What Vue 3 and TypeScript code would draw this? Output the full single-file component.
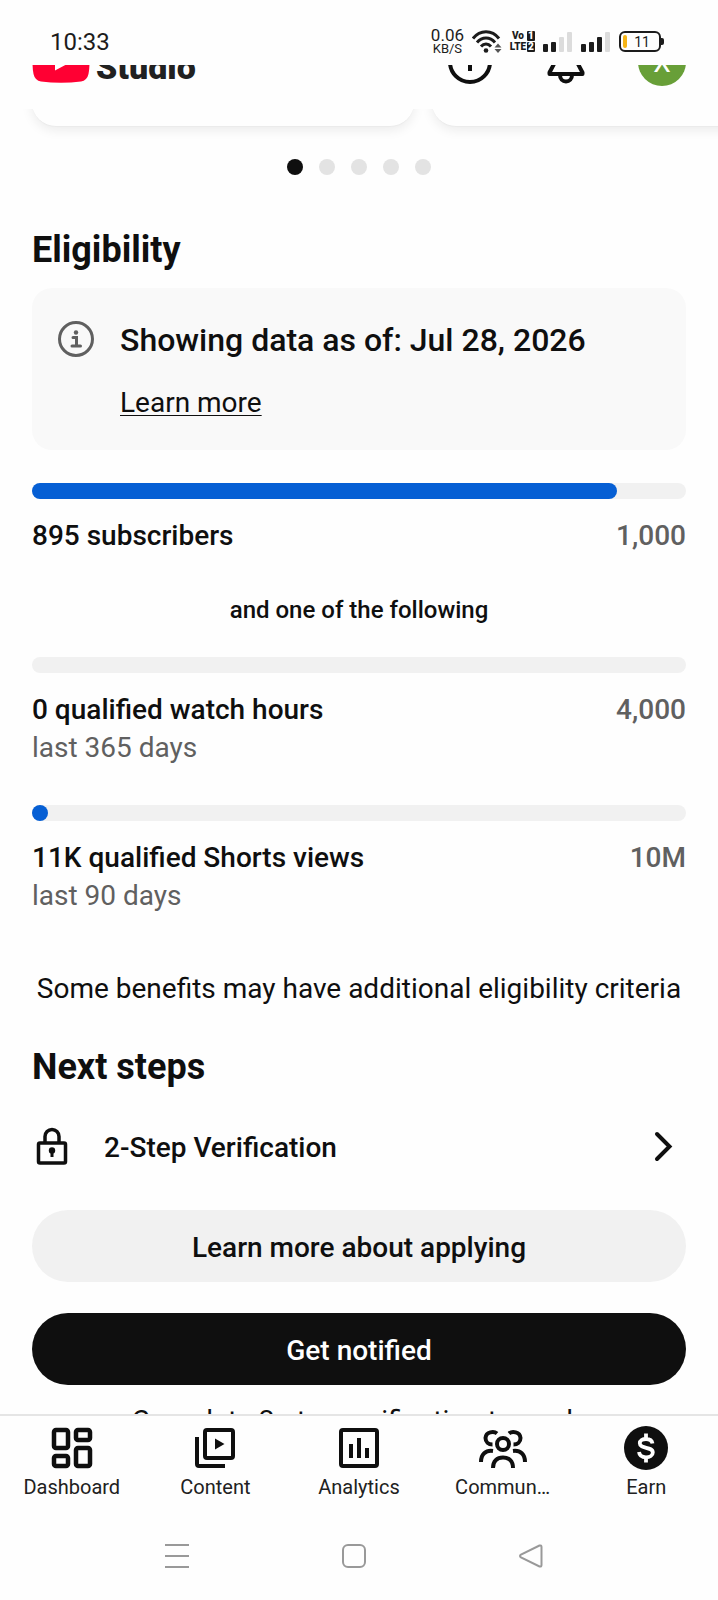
<script setup lang="ts">
interface Metric {
  id: string
  label: string
  goal: string
  period?: string
  percent: number
}

const subscribers: Metric = { id: 'subscribers', label: '895 subscribers', goal: '1,000', percent: 89.5 }

const alternatives: Metric[] = [
  { id: 'hours', label: '0 qualified watch hours', goal: '4,000', period: 'last 365 days', percent: 0 },
  { id: 'shorts', label: '11K qualified Shorts views', goal: '10M', period: 'last 90 days', percent: 0.11 },
]

const signals = [2, 3]
const barHeights = [8, 10, 15, 20]
const slides = 5
const activeSlide = 1
</script>

<template>
  <div class="app">
    <div class="status">
      <time class="clock">10:33</time>
      <div class="status-icons">
        <div class="speed"><span>0.06</span><small>KB/S</small></div>
        <svg class="wifi" viewBox="0 0 30 24" aria-hidden="true">
          <g fill="none" stroke="#1c1c1c" stroke-width="3">
            <path d="M1 8.500C8-.5 20-.5 27 8.500" />
            <path d="M5 12.500C10 6.500 18 6.500 23 12.500" />
            <path d="M9 16.500C12 13 16 13 19 16.500" />
          </g>
          <circle cx="14" cy="20.500" r="2.300" fill="#1c1c1c" />
          <path d="M26 13.500l3.500 4h-7zM26 23l3.500-4h-7z" fill="#555" />
        </svg>
        <div class="volte">
          <span>Vo</span><b>1</b>
          <span>LTE</span><b>2</b>
        </div>
        <svg v-for="level in signals" :key="level" class="signal" viewBox="0 0 30 20" aria-hidden="true">
          <rect
            v-for="(h, i) in barHeights"
            :key="h"
            :x="i * 8"
            :y="20 - h"
            width="5"
            :height="h"
            rx="1"
            :fill="i < level ? '#1c1c1c' : '#dcdcdc'"
          />
        </svg>
        <div class="battery"><i></i><span>11</span></div>
      </div>
    </div>

    <header class="topbar">
      <div class="topbar-row">
        <svg class="logo" viewBox="0 0 58 41" aria-hidden="true">
          <path d="M9 1.500Q29-1 49 1.500Q55 2.500 56.500 9Q58.500 20.500 56.500 32Q55 38.500 49 39.500Q29 42 9 39.500Q3 38.500 1.500 32Q-.5 20.500 1.500 9Q3 2.500 9 1.500Z" fill="#ff0033" />
          <path d="M23 11.500v17l16-8.500z" fill="#fff" />
        </svg>
        <span class="brand">Studio</span>
        <div class="actions">
          <button class="icon-button" aria-label="Create">
            <svg viewBox="0 0 48 48" fill="none" stroke="#0f0f0f" stroke-width="4">
              <circle cx="24" cy="24" r="20" />
              <path d="M24 15v18M15 24h18" />
            </svg>
          </button>
          <button class="icon-button" aria-label="Notifications">
            <svg viewBox="0 0 48 48" fill="none" stroke="#0f0f0f" stroke-width="4" stroke-linejoin="round">
              <path d="M24 5c-8 0-12 5-12 13v8L7.500 34.500v1.500h33v-1.500L36 26v-8c0-8-4-13-12-13z" />
              <path d="M18 37c0 4 2.500 6.500 6 6.500s6-2.500 6-6.500" />
            </svg>
          </button>
          <button class="avatar" aria-label="Account">X</button>
        </div>
      </div>
    </header>

    <main class="content">
      <div class="carousel">
        <div class="slide"></div>
        <div class="slide"></div>
      </div>
      <div class="dots">
        <span v-for="n in slides" :key="n" :class="['dot', { active: n === activeSlide }]"></span>
      </div>

      <section class="eligibility">
        <h2>Eligibility</h2>
        <div class="notice">
          <svg class="info" viewBox="0 0 36 36" aria-hidden="true">
            <circle cx="18" cy="18" r="16.500" fill="none" stroke="#606060" stroke-width="3" />
            <circle cx="18" cy="11.500" r="2.200" fill="#606060" />
            <path d="M15 16.500h3.500v8.500M14 25h8.500" fill="none" stroke="#606060" stroke-width="3" stroke-linecap="round" />
          </svg>
          <div class="notice-text">
            <p>Showing data as of: Jul 28, 2026</p>
            <a href="#">Learn more</a>
          </div>
        </div>

        <div class="metric">
          <div class="track" role="progressbar" :aria-valuenow="subscribers.percent" aria-label="Subscribers">
            <div class="fill" :style="{ width: subscribers.percent + '%' }"></div>
          </div>
          <div class="metric-row">
            <span>{{ subscribers.label }}</span><span class="goal">{{ subscribers.goal }}</span>
          </div>
        </div>

        <p class="either">and one of the following</p>

        <div v-for="m in alternatives" :key="m.id" class="metric alternative">
          <div class="track" role="progressbar" :aria-valuenow="m.percent" :aria-label="m.label">
            <div v-if="m.percent > 0" class="fill" :style="{ width: m.percent + '%' }"></div>
          </div>
          <div class="metric-row">
            <span>{{ m.label }}</span><span class="goal">{{ m.goal }}</span>
          </div>
          <p class="period">{{ m.period }}</p>
        </div>

        <p class="criteria">Some benefits may have additional eligibility criteria</p>
      </section>

      <section class="next">
        <h2>Next steps</h2>
        <button class="step">
          <svg class="lock" viewBox="0 0 40 40" aria-hidden="true">
            <rect x="6.500" y="17" width="27" height="20" rx="1.500" fill="none" stroke="#0f0f0f" stroke-width="3.500" />
            <path d="M13 16v-5.500a7 7 0 0 1 14 0V16" fill="none" stroke="#0f0f0f" stroke-width="3.500" />
            <circle cx="20" cy="24.500" r="3.200" fill="#0f0f0f" />
            <path d="M20 25v6" stroke="#0f0f0f" stroke-width="3" />
          </svg>
          <span>2-Step Verification</span>
          <svg class="chevron" viewBox="0 0 48 48" aria-hidden="true">
            <path d="M19 12l12.500 12.500L19 37" fill="none" stroke="#0f0f0f" stroke-width="4" stroke-linecap="round" />
          </svg>
        </button>
        <button class="pill light">Learn more about applying</button>
        <button class="pill dark">Get notified</button>
        <p class="hint">Complete 2-step verification to apply</p>
      </section>
    </main>

    <nav class="tabs" aria-label="Main">
      <a href="#" class="tab">
        <svg viewBox="0 0 48 48" fill="none" stroke="#0f0f0f" stroke-width="4.500">
          <rect x="6" y="6" width="14" height="18" rx="2" />
          <rect x="28" y="6" width="14" height="10" rx="2" />
          <rect x="6" y="32" width="14" height="10" rx="2" />
          <rect x="28" y="24" width="14" height="18" rx="2" />
        </svg>
        <span>Dashboard</span>
      </a>
      <a href="#" class="tab">
        <svg viewBox="0 0 48 48" fill="none" stroke="#0f0f0f" stroke-width="4">
          <rect x="14" y="6" width="28" height="28" rx="2" />
          <path d="M6 13v27q0 2 2 2h26" />
          <path d="M24 14.500v11l9.500-5.500z" fill="#0f0f0f" stroke="none" />
        </svg>
        <span>Content</span>
      </a>
      <a href="#" class="tab">
        <svg viewBox="0 0 48 48" fill="none" stroke="#0f0f0f" stroke-width="4">
          <rect x="6" y="6" width="36" height="36" rx="2" />
          <path d="M16 20v14M24 14v20M32 24v10" />
        </svg>
        <span>Analytics</span>
      </a>
      <a href="#" class="tab">
        <svg viewBox="0 0 48 48" fill="none" stroke="#0f0f0f" stroke-width="4">
          <circle cx="24" cy="20" r="6" />
          <path d="M14 44c0-7 4-10.500 10-10.500s10 3.500 10 10.500" />
          <path d="M18 9.500C15 7 7 7.500 6.500 14c0 4 3 6.500 7 6.500" />
          <path d="M30 9.500c3-2.500 11-2 11.500 4.500 0 4-3 6.500-7 6.500" />
          <path d="M2 38c0-7.500 4.500-12 12-11" />
          <path d="M46 38c0-7.500-4.500-12-12-11" />
        </svg>
        <span>Commun…</span>
      </a>
      <a href="#" class="tab" aria-current="page">
        <svg viewBox="0 0 48 48">
          <circle cx="24" cy="24" r="22" fill="#0f0f0f" />
          <path d="M30.500 19.500c-.5-3-3-4.500-6.500-4.500s-6.200 1.600-6.200 4.300c0 6 13 3 13 9.200 0 3-3 4.800-6.800 4.800-4 0-6.600-2-7-5.200M24 9.500V15M24 33v5.500" fill="none" stroke="#fff" stroke-width="3.800" />
        </svg>
        <span>Earn</span>
      </a>
    </nav>

    <div class="system">
      <button aria-label="Recent apps">
        <svg viewBox="0 0 24 24"><path d="M0 1h24M0 12h24M0 23h24" /></svg>
      </button>
      <button aria-label="Home">
        <svg viewBox="0 0 24 24"><rect x="1" y="1" width="22" height="22" rx="5" /></svg>
      </button>
      <button aria-label="Back">
        <svg viewBox="0 0 24 24"><path d="M20.500 1.500L2 10.500q-2 1.500 0 3l18.500 9q2 .5 2-1.500V3q0-2-2-1.500z" /></svg>
      </button>
    </div>
  </div>
</template>

<style>
body {
  margin: 0;
  background: #fefefe;
}
</style>

<style scoped>
.app {
  display: flex;
  flex-direction: column;
  height: 100vh;
  overflow: hidden;
  font-family: Roboto, "Liberation Sans", sans-serif;
  color: #0f0f0f;
  background: #fefefe;
}
h2, p {
  margin: 0;
}
button {
  padding: 0;
  border: 0;
  background: none;
  color: inherit;
  font: inherit;
}
svg {
  display: block;
  flex: none;
}

.status {
  display: flex;
  flex: none;
  align-items: center;
  justify-content: space-between;
  height: 47px;
  padding: 18px 54px 0 50px;
}
.clock {
  font-size: 24px;
  line-height: 28px;
  color: #1c1c1c;
}
.status-icons {
  display: flex;
  align-items: center;
  gap: 8px;
  color: #1c1c1c;
}
.speed {
  display: flex;
  flex-direction: column;
  align-items: center;
  font-size: 17px;
  line-height: 14px;
}
.speed small {
  font-size: 13px;
}
.wifi {
  width: 30px;
  height: 24px;
}
.volte {
  display: grid;
  grid-template-columns: 16px 8px;
  gap: 1px;
  font-size: 10px;
  font-weight: 900;
  line-height: 10px;
  text-align: center;
}
.volte span {
  display: flex;
  justify-content: center;
}
.volte b {
  border-radius: 1px;
  background: #1c1c1c;
  color: #fff;
}
.signal {
  width: 30px;
  height: 20px;
}
.battery {
  display: flex;
  align-items: center;
  position: relative;
  box-sizing: border-box;
  width: 42px;
  height: 21px;
  margin-right: 3px;
  padding: 2px;
  border: 2px solid #1c1c1c;
  border-radius: 6px;
  font-size: 14px;
}
.battery::after {
  content: "";
  position: absolute;
  top: 5px;
  right: -5px;
  width: 3px;
  height: 7px;
  border-radius: 0 2px 2px 0;
  background: #1c1c1c;
}
.battery i {
  width: 4px;
  height: 100%;
  border-radius: 2px;
  background: #f5b416;
}
.battery span {
  flex: 1;
  text-align: center;
}

.topbar {
  display: flex;
  flex: none;
  align-items: flex-end;
  height: 44px;
  overflow: hidden;
}
.topbar-row {
  display: flex;
  flex: 1;
  align-items: center;
  height: 94px;
  padding: 0 32px;
}
.logo {
  width: 58px;
  height: 41px;
}
.brand {
  padding: 10px 0 0 6px;
  font-size: 34px;
  font-weight: 900;
  line-height: 40px;
  color: #212121;
}
.actions {
  display: flex;
  gap: 48px;
  margin-left: auto;
}
.icon-button, .icon-button svg, .avatar {
  width: 48px;
  height: 48px;
}
.avatar {
  border-radius: 50%;
  background: #689f38;
  color: #fff;
  font-size: 28px;
}

.content {
  flex: 1;
  min-height: 0;
  overflow: hidden;
}
.carousel {
  display: flex;
  align-items: flex-end;
  gap: 18px;
  height: 18px;
  padding: 0 0 24px 32px;
  overflow: hidden;
}
.slide {
  flex: none;
  box-sizing: border-box;
  width: 382px;
  height: 120px;
  border-bottom: 1px solid #ebebeb;
  border-radius: 24px;
  background: #fefefe;
  box-shadow: 0 3px 12px rgba(0, 0, 0, 0.08);
}
.dots {
  display: flex;
  justify-content: center;
  gap: 16px;
  padding-top: 8px;
}
.dot {
  width: 16px;
  height: 16px;
  border-radius: 50%;
  background: #e3e3e3;
}
.dot.active {
  background: #0f0f0f;
}

.eligibility, .next {
  padding: 0 32px;
}
.eligibility {
  padding-top: 53px;
}
h2 {
  font-size: 36px;
  font-weight: 700;
  line-height: 44px;
}
.notice {
  display: flex;
  gap: 26px;
  margin: 16px 0 33px;
  padding: 32px 26px 29px;
  border-radius: 20px;
  background: #f9f9f9;
}
.info {
  width: 36px;
  height: 36px;
  padding-top: 1px;
}
.notice-text {
  display: flex;
  flex-direction: column;
  align-items: flex-start;
  gap: 25px;
}
.notice p {
  font-size: 32px;
  font-weight: 500;
  line-height: 40px;
}
.notice a {
  color: inherit;
  font-size: 28px;
  line-height: 36px;
  text-decoration-thickness: 1px;
  text-underline-offset: 3px;
}
.track {
  height: 16px;
  border-radius: 8px;
  background: #f1f1f1;
}
.fill {
  min-width: 16px;
  height: 16px;
  border-radius: 8px;
  background: #065fd4;
}
.metric-row {
  display: flex;
  justify-content: space-between;
  margin-top: 18px;
  font-size: 28px;
  font-weight: 500;
  line-height: 38px;
}
.goal, .period {
  color: #606060;
}
.period, .criteria {
  font-size: 28px;
  line-height: 38px;
}
.either {
  margin: 39px 0 31px;
  font-size: 24px;
  font-weight: 500;
  line-height: 32px;
  text-align: center;
}
.alternative + .alternative {
  margin-top: 38px;
}
.criteria {
  margin-top: 55px;
  text-align: center;
  white-space: nowrap;
}

.next {
  padding-top: 37px;
}
.step {
  display: flex;
  align-items: center;
  width: 100%;
  height: 64px;
  margin: 25px 0 32px;
  font-size: 28px;
  font-weight: 500;
}
.lock {
  width: 40px;
  height: 40px;
}
.step span {
  padding: 2px 0 0 32px;
}
.chevron {
  width: 48px;
  height: 48px;
  margin-left: auto;
}
.pill {
  display: block;
  box-sizing: border-box;
  width: 100%;
  height: 72px;
  padding-top: 2px;
  border-radius: 36px;
  font-size: 28px;
  font-weight: 500;
}
.pill.light {
  background: #f1f1f1;
}
.pill.dark {
  margin-top: 31px;
  background: #0f0f0f;
  color: #fff;
}
.hint {
  margin-top: 18px;
  font-size: 28px;
  line-height: 36px;
  text-align: center;
}

.tabs {
  display: grid;
  flex: none;
  grid-template-columns: repeat(5, 1fr);
  padding: 8px 0 13px;
  border-top: 2px solid #e5e5e5;
}
.tab {
  display: flex;
  flex-direction: column;
  align-items: center;
  gap: 3px;
  color: #212121;
  font-size: 20px;
  line-height: 24px;
  text-decoration: none;
}
.tab svg {
  width: 48px;
  height: 48px;
}
.system {
  display: grid;
  flex: none;
  grid-template-columns: repeat(3, 1fr);
  padding: 0 99px 0 88px;
}
.system button {
  display: flex;
  align-items: center;
  justify-content: center;
  height: 88px;
}
.system svg {
  width: 24px;
  height: 24px;
  fill: none;
  stroke: #999;
  stroke-width: 2;
}
</style>
